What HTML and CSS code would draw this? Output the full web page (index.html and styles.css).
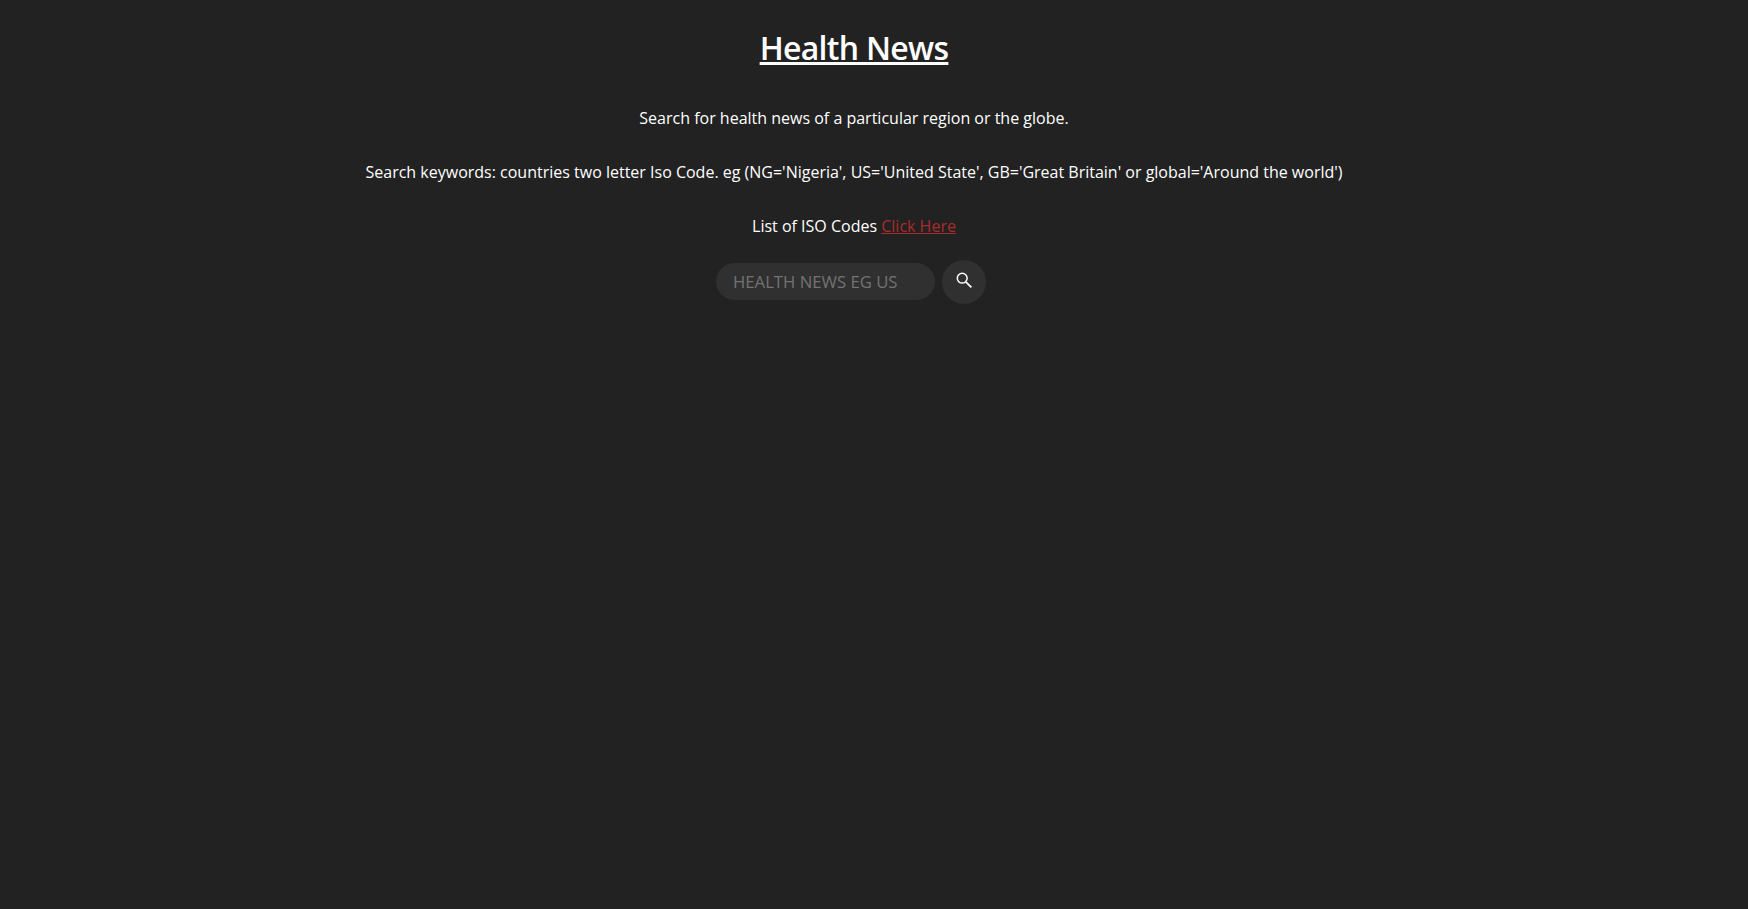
FILE: index.html
```html
<!DOCTYPE html>
<html lang="en">
<head>
    <meta charset="UTF-8">
    <title>Health News</title>
    <link rel="stylesheet" href="styles.css">
</head>
<body>
    <main class="container">
        <h1>Health News</h1>
        <p>Search for health news of a particular region or the globe.</p>
        <p>Search keywords: countries two letter Iso Code. eg (NG='Nigeria', US='United State', GB='Great Britain' or global='Around the world')</p>
        <p>List of ISO Codes <a href="#">Click Here</a></p>
        <form class="search-form">
            <input type="text" placeholder="HEALTH NEWS EG US">
            <button type="button" aria-label="Search">
                <svg class="search-icon" viewBox="0 0 16 16" width="16" height="16"><circle cx="6.2" cy="6.2" r="4.9" fill="none" stroke="#fff" stroke-width="1.5"/><path d="M9.8 9.8 15.4 15.4" fill="none" stroke="#fff" stroke-width="1.7"/></svg>
            </button>
        </form>
    </main>
</body>
</html>
```
FILE: styles.css
```css
body {
    margin: 0;
    background-color: #222222;
    color: #ffffff;
    font-family: 'Open Sans', sans-serif;
    font-size: 16px;
    min-height: 100vh;
}

.container {
    text-align: center;
    padding: 21px 40px 0 0;
}

h1 {
    font-size: 32px;
    font-weight: 600;
    letter-spacing: -0.7px;
    line-height: 54px;
    margin: 0 0 32px;
    text-decoration: underline;
}

p {
    line-height: 22px;
    margin: 0 0 32px;
}

a {
    color: #a82c2c;
}

.search-form {
    display: flex;
    justify-content: center;
    align-items: flex-start;
    gap: 7px;
    margin-top: -9px;
    padding-right: 6px;
}

input {
    width: 219px;
    height: 37px;
    box-sizing: border-box;
    margin-top: 3px;
    padding: 0 17px;
    border: none;
    border-radius: 20px;
    background-color: #303030;
    color: #fff;
    font-family: inherit;
    font-size: 16.7px;
}

input::placeholder {
    color: #737373;
}

button {
    display: flex;
    align-items: center;
    justify-content: center;
    width: 44px;
    height: 44px;
    padding: 0 0 4px;
    border: none;
    border-radius: 50%;
    background-color: #303030;
}
```
